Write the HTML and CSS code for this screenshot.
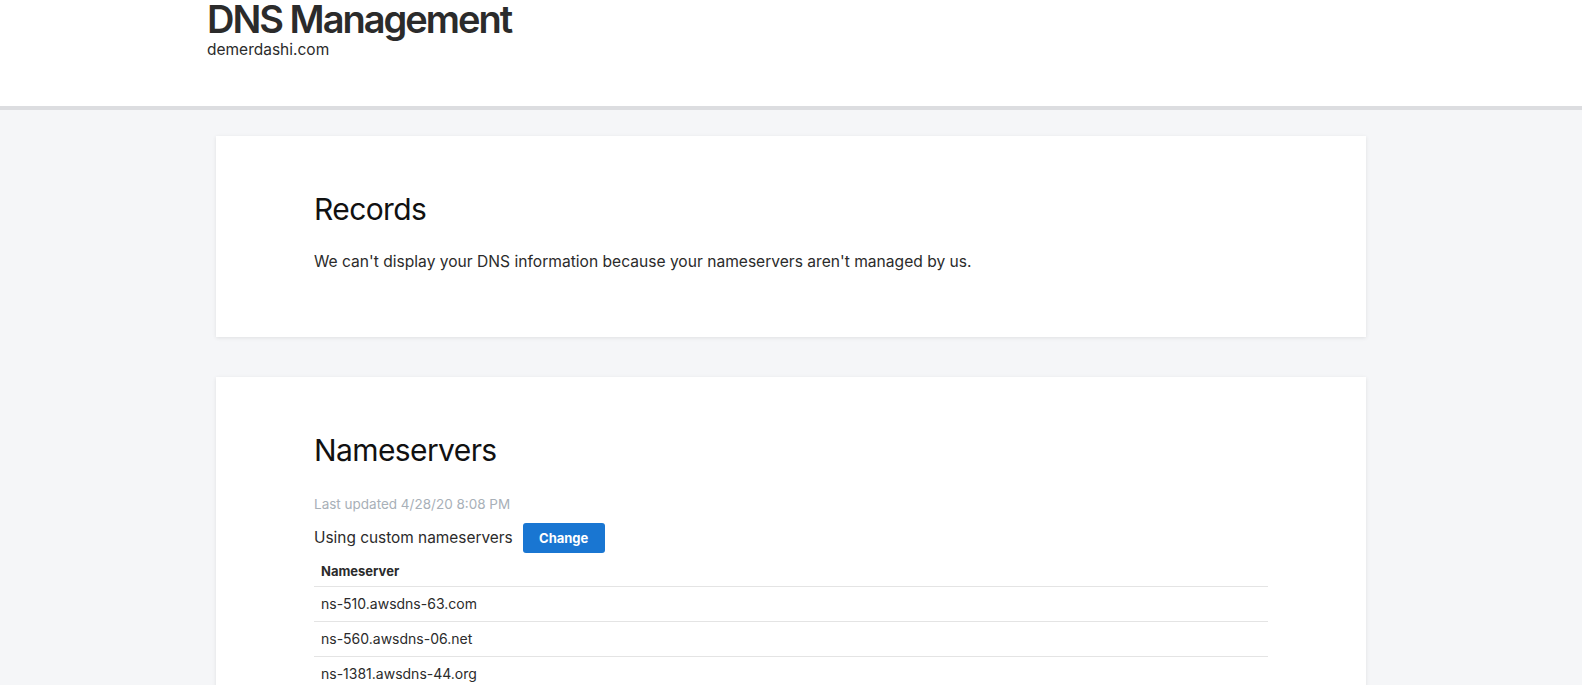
FILE: index.html
```html
<!DOCTYPE html>
<html lang="en">
<head>
<meta charset="utf-8">
<title>DNS Management</title>
<link rel="stylesheet" href="styles.css">
</head>
<body>
<header class="page-header">
  <div class="header-inner">
    <h1 class="title">DNS Management</h1>
    <div class="domain">demerdashi.com</div>
  </div>
</header>
<main class="content">
  <section class="card card-records">
    <h2 class="card-title">Records</h2>
    <p class="card-text">We can't display your DNS information because your nameservers aren't managed by us.</p>
  </section>
  <section class="card card-ns">
    <h2 class="card-title">Nameservers</h2>
    <div class="updated">Last updated 4/28/20 8:08 PM</div>
    <div class="using">
      <span class="using-label">Using custom nameservers</span>
      <button class="btn-change" type="button">Change</button>
    </div>
    <table class="ns-table">
      <thead>
        <tr><th>Nameserver</th></tr>
      </thead>
      <tbody>
        <tr><td>ns-510.awsdns-63.com</td></tr>
        <tr><td>ns-560.awsdns-06.net</td></tr>
        <tr><td>ns-1381.awsdns-44.org</td></tr>
      </tbody>
    </table>
  </section>
</main>
</body>
</html>
```
FILE: styles.css
```css
* { box-sizing: border-box; }
html, body { margin: 0; padding: 0; }
body {
  background: #f5f6f8;
  font-family: Inter, "Noto Sans", "Liberation Sans", sans-serif;
  color: #2b2b2b;
}
.page-header {
  background: #fff;
  height: 110px;
  border-bottom: 4px solid #dcdde0;
}
.header-inner {
  width: 1168px;
  margin: 0 auto;
}
.title {
  margin: 0;
  font-size: 38px;
  line-height: 38px;
  font-weight: 600;
  letter-spacing: -2px;
  color: #2b2b2b;
}
.domain {
  font-size: 15.5px;
  line-height: 20px;
  margin-top: 2px;
  color: #2b2b2b;
}
.content {
  padding-top: 26px;
  display: flex;
  flex-direction: column;
  align-items: center;
  gap: 40px;
}
.card {
  width: 1150px;
  background: #fff;
  box-shadow: 0 1px 4px rgba(0,0,0,0.09);
  padding: 54px 98px 0 98px;
}
.card-records { height: 201px; }
.card-ns { padding-bottom: 40px; }
.card-title {
  margin: 0;
  font-size: 30px;
  line-height: 38px;
  font-weight: 400;
  letter-spacing: -0.6px;
  color: #111;
}
.card-text {
  margin: 23px 0 0 0;
  font-size: 15.6px;
  line-height: 22px;
  color: #2b2b2b;
}
.updated {
  margin-top: 26px;
  font-size: 13.5px;
  line-height: 18px;
  color: #a8b0b8;
}
.using {
  margin-top: 10px;
  display: flex;
  align-items: center;
  gap: 10px;
}
.using-label {
  font-size: 15.4px;
  line-height: 22px;
}
.btn-change {
  width: 82px;
  height: 30px;
  border: none;
  border-radius: 3px;
  background: #1976d2;
  color: #fff;
  font-family: inherit;
  font-weight: 700;
  font-size: 13px;
  padding: 0;
}
.ns-table {
  width: 100%;
  border-collapse: collapse;
  margin-top: 0;
}
.ns-table th {
  text-align: left;
  vertical-align: bottom;
  font-size: 13px;
  line-height: 16px;
  font-weight: 700;
  padding: 0 7px 7px 7px;
  height: 33px;
  border-bottom: 1px solid #e4e4e4;
}
.ns-table td {
  font-size: 14px;
  padding: 0 7px;
  height: 35px;
  border-bottom: 1px solid #e4e4e4;
}
```
